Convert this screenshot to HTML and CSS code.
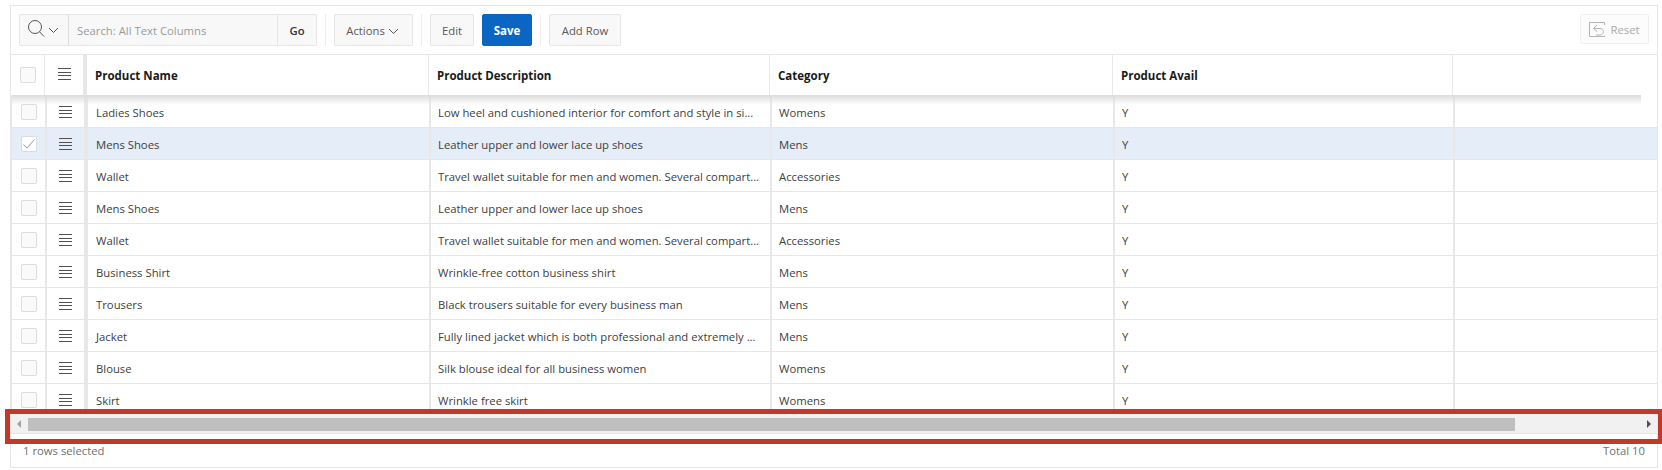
FILE: index.html
```html
<!DOCTYPE html>
<html lang="en">
<head>
  <meta charset="UTF-8" />
  <title>Products Grid</title>
  <link rel="stylesheet" href="styles.css">
</head>
<body>
  <div class="region">
    <div class="toolbar">
      <div class="search">
        <button class="search-menu">
          <svg width="20" height="20" viewBox="0 0 20 20" class="stroke-icon"><circle cx="7" cy="7" r="6.5"/><path d="M11.5 11.7 16 16.5"/></svg>
          <svg width="11" height="7" viewBox="0 0 11 7" class="stroke-icon"><path d="M1 1 5.5 5.5 10 1"/></svg>
        </button>
        <span class="search-input">Search: All Text Columns</span>
        <button class="search-go">Go</button>
      </div>
      <span class="divider"></span>
      <button class="btn btn-actions">Actions
        <svg width="11" height="7" viewBox="0 0 11 7" class="stroke-icon"><path d="M1 1 5.5 5.5 10 1"/></svg>
      </button>
      <span class="divider"></span>
      <button class="btn btn-edit">Edit</button>
      <button class="btn btn-save">Save</button>
      <span class="divider"></span>
      <button class="btn btn-add">Add Row</button>
      <button class="btn btn-reset">
        <svg width="16" height="15" viewBox="0 0 16 15" class="reset-icon"><path d="M15.5 3V.5H.5v14h15v-1"/><path d="M8 3 4.5 6.5 8 9.5M4.5 6.5H11c2 0 3.500 1.200 3.500 3S13 13 11 13H7"/></svg>
        Reset
      </button>
    </div>

    <div class="row row-head">
      <div class="cell cell-check"><span class="checkbox"></span></div>
      <div class="cell cell-menu"><span class="burger"></span></div>
      <div class="cell cell-frozen">Product Name</div>
      <div class="cell">Product Description</div>
      <div class="cell">Category</div>
      <div class="cell">Product Avail</div>
      <div class="cell"></div>
    </div>

    <div class="grid-body">
      <div class="row">
        <div class="cell cell-check"><span class="checkbox"></span></div>
        <div class="cell cell-menu"><span class="burger"></span></div>
        <div class="cell cell-frozen">Ladies Shoes</div>
        <div class="cell">Low heel and cushioned interior for comfort and style in si...</div>
        <div class="cell">Womens</div>
        <div class="cell">Y</div>
        <div class="cell"></div>
      </div>
      <div class="row row-selected">
        <div class="cell cell-check"><span class="checkbox"><svg width="14" height="12" viewBox="0 0 14 12" class="check-icon"><path d="M1.5 6.5 5 10 12.5 1.5"/></svg></span></div>
        <div class="cell cell-menu"><span class="burger"></span></div>
        <div class="cell cell-frozen">Mens Shoes</div>
        <div class="cell">Leather upper and lower lace up shoes</div>
        <div class="cell">Mens</div>
        <div class="cell">Y</div>
        <div class="cell"></div>
      </div>
      <div class="row">
        <div class="cell cell-check"><span class="checkbox"></span></div>
        <div class="cell cell-menu"><span class="burger"></span></div>
        <div class="cell cell-frozen">Wallet</div>
        <div class="cell">Travel wallet suitable for men and women. Several compart...</div>
        <div class="cell">Accessories</div>
        <div class="cell">Y</div>
        <div class="cell"></div>
      </div>
      <div class="row">
        <div class="cell cell-check"><span class="checkbox"></span></div>
        <div class="cell cell-menu"><span class="burger"></span></div>
        <div class="cell cell-frozen">Mens Shoes</div>
        <div class="cell">Leather upper and lower lace up shoes</div>
        <div class="cell">Mens</div>
        <div class="cell">Y</div>
        <div class="cell"></div>
      </div>
      <div class="row">
        <div class="cell cell-check"><span class="checkbox"></span></div>
        <div class="cell cell-menu"><span class="burger"></span></div>
        <div class="cell cell-frozen">Wallet</div>
        <div class="cell">Travel wallet suitable for men and women. Several compart...</div>
        <div class="cell">Accessories</div>
        <div class="cell">Y</div>
        <div class="cell"></div>
      </div>
      <div class="row">
        <div class="cell cell-check"><span class="checkbox"></span></div>
        <div class="cell cell-menu"><span class="burger"></span></div>
        <div class="cell cell-frozen">Business Shirt</div>
        <div class="cell">Wrinkle-free cotton business shirt</div>
        <div class="cell">Mens</div>
        <div class="cell">Y</div>
        <div class="cell"></div>
      </div>
      <div class="row">
        <div class="cell cell-check"><span class="checkbox"></span></div>
        <div class="cell cell-menu"><span class="burger"></span></div>
        <div class="cell cell-frozen">Trousers</div>
        <div class="cell">Black trousers suitable for every business man</div>
        <div class="cell">Mens</div>
        <div class="cell">Y</div>
        <div class="cell"></div>
      </div>
      <div class="row">
        <div class="cell cell-check"><span class="checkbox"></span></div>
        <div class="cell cell-menu"><span class="burger"></span></div>
        <div class="cell cell-frozen">Jacket</div>
        <div class="cell">Fully lined jacket which is both professional and extremely ...</div>
        <div class="cell">Mens</div>
        <div class="cell">Y</div>
        <div class="cell"></div>
      </div>
      <div class="row">
        <div class="cell cell-check"><span class="checkbox"></span></div>
        <div class="cell cell-menu"><span class="burger"></span></div>
        <div class="cell cell-frozen">Blouse</div>
        <div class="cell">Silk blouse ideal for all business women</div>
        <div class="cell">Womens</div>
        <div class="cell">Y</div>
        <div class="cell"></div>
      </div>
      <div class="row">
        <div class="cell cell-check"><span class="checkbox"></span></div>
        <div class="cell cell-menu"><span class="burger"></span></div>
        <div class="cell cell-frozen">Skirt</div>
        <div class="cell">Wrinkle free skirt</div>
        <div class="cell">Womens</div>
        <div class="cell">Y</div>
        <div class="cell"></div>
      </div>
    </div>

    <div class="scrollbar">
      <span class="arrow arrow-left"></span>
      <span class="thumb"></span>
      <span class="arrow arrow-right"></span>
    </div>

    <div class="footer">
      <span>1 rows selected</span>
      <span>Total 10</span>
    </div>

    <div class="callout"></div>
  </div>
</body>
</html>
```

FILE: styles.css
```css
* {
  box-sizing: border-box;
}
html, body {
  overflow: hidden;
}
body {
  margin: 0;
  height: 470px;
  padding: 5px 4px 0 10px;
  background: #fff;
  font-family: "Open Sans", "Noto Sans", sans-serif;
  font-size: 11.3px;
  color: #404040;
}
button {
  font: inherit;
  color: inherit;
}

.region {
  position: relative;
  height: 463px;
  border: 1px solid #e6e6e6;
  display: flex;
  flex-direction: column;
}

/* toolbar */
.toolbar {
  height: 49px;
  flex: none;
  display: flex;
  align-items: flex-start;
  padding: 8px 8px 0 8px;
  border-bottom: 1px solid #e6e6e6;
}
.search {
  display: flex;
  width: 298px;
  height: 32px;
  border: 1px solid #e6e6e6;
  border-radius: 2px;
  background: #f8f8f8;
}
.search-menu {
  width: 49px;
  padding: 0 0 0 8px;
  border: 0;
  border-right: 1px solid #dcdcdc;
  background: none;
  display: flex;
  align-items: center;
}
.search-input {
  flex: 1;
  padding-left: 8px;
  line-height: 31px;
  color: #9a9a9a;
}
.search-go {
  width: 39px;
  padding: 0;
  border: 0;
  border-left: 1px solid #e6e6e6;
  background: none;
  font-weight: 600;
  color: #333;
}
.stroke-icon {
  fill: none;
  stroke: #555;
  stroke-width: 1;
  flex: none;
}
.divider {
  width: 1px;
  height: 32px;
  margin: 0 8px;
  background: #eee;
}
.btn {
  height: 32px;
  padding: 0;
  border: 1px solid #e6e6e6;
  border-radius: 2px;
  background: #f8f8f8;
  color: #595959;
}
.btn-actions {
  width: 79px;
  padding-right: 2px;
}
.btn-edit {
  width: 44px;
}
.btn-save {
  width: 50px;
  margin-left: 8px;
  border-color: #0b66c3;
  background: #0b66c3;
  color: #fff;
  font-weight: 700;
  font-size: 11.5px;
}
.btn-add {
  width: 72px;
}
.btn-reset {
  width: 69px;
  height: 30px;
  margin-left: auto;
  border-color: #f0f0f0;
  background: #fcfcfc;
  color: #aaa;
  display: flex;
  align-items: center;
  justify-content: center;
  gap: 5px;
}
.reset-icon {
  fill: none;
  stroke: #b4b4b4;
  stroke-width: 1;
}

/* rows */
.row {
  display: grid;
  grid-template-columns: 33px 39px 345px 341px 343px 340px 1fr;
  height: 32px;
  border-bottom: 1px solid #e6e6e6;
}
.row-head {
  flex: none;
  height: 40px;
  font-size: 11.5px;
  font-weight: 700;
  color: #1a1a1a;
  border-bottom: 0;
}
.row-head .cell {
  border-left-width: 1px;
  padding: 0 0 0 8px;
}
.row-head .cell-check,
.row-head .cell-menu {
  padding-left: 0;
}
.row-head .cell-check {
  border-left: 0;
}
.row-head .cell-frozen {
  padding-left: 8px;
  border-left: 4px solid #e6e6e6;
}
.row-head .burger {
  margin-top: -2px;
}
.row-selected {
  background: #e4edf8;
}
.cell {
  display: flex;
  align-items: center;
  padding: 2px 0 0 7px;
  border-left: 2px solid #e8e8e8;
  white-space: nowrap;
  overflow: hidden;
}
.cell-check {
  border-left: 0;
  padding: 0;
  justify-content: center;
}
.cell-menu {
  padding: 0;
  justify-content: center;
}
.cell-frozen {
  padding-left: 8px;
  border-left-width: 4px;
}
.checkbox {
  width: 16px;
  height: 16px;
  border: 1px solid #dcdcdc;
  border-radius: 2px;
  background: #fafafa;
  display: flex;
  align-items: center;
  justify-content: center;
}
.row-selected .checkbox {
  background: #fff;
}
.check-icon {
  fill: none;
  stroke: #8a9bb0;
  stroke-width: 1;
}
.burger {
  width: 13px;
  height: 12px;
  background: repeating-linear-gradient(#505050 0 1px, transparent 1px 3.67px);
}

.grid-body {
  position: relative;
  height: 319px;
  flex: none;
  overflow: hidden;
  padding-top: 1px;
  border-left: 1px solid #e8e8e8;
}
.grid-body::before {
  content: "";
  position: absolute;
  top: 0;
  left: 0;
  right: 16px;
  height: 10px;
  background: linear-gradient(#dcdcdc, rgba(255, 255, 255, 0));
}

/* scrollbar and footer */
.scrollbar {
  flex: none;
  height: 20px;
  background: #f1f1f1;
  border-bottom: 1px solid #e6e6e6;
  display: flex;
  align-items: center;
  padding: 0 0 0 17px;
}
.thumb {
  width: 1487px;
  height: 13px;
  margin-top: 1px;
  background: #bfbfbf;
}
.arrow {
  width: 0;
  height: 0;
  border-top: 4px solid transparent;
  border-bottom: 4px solid transparent;
}
.arrow-left {
  margin-left: -11px;
  border-right: 4px solid #a3a3a3;
  position: absolute;
}
.arrow-right {
  margin-left: auto;
  margin-right: 6px;
  border-left: 4px solid #505050;
}
.footer {
  flex: 1;
  display: flex;
  justify-content: space-between;
  padding: 9px 12px 0 12px;
  color: #707070;
}

/* red highlight drawn over the screenshot */
.callout {
  position: absolute;
  top: 403px;
  left: -6px;
  right: -6px;
  height: 35px;
  border: 5px solid #c0392b;
}
```
